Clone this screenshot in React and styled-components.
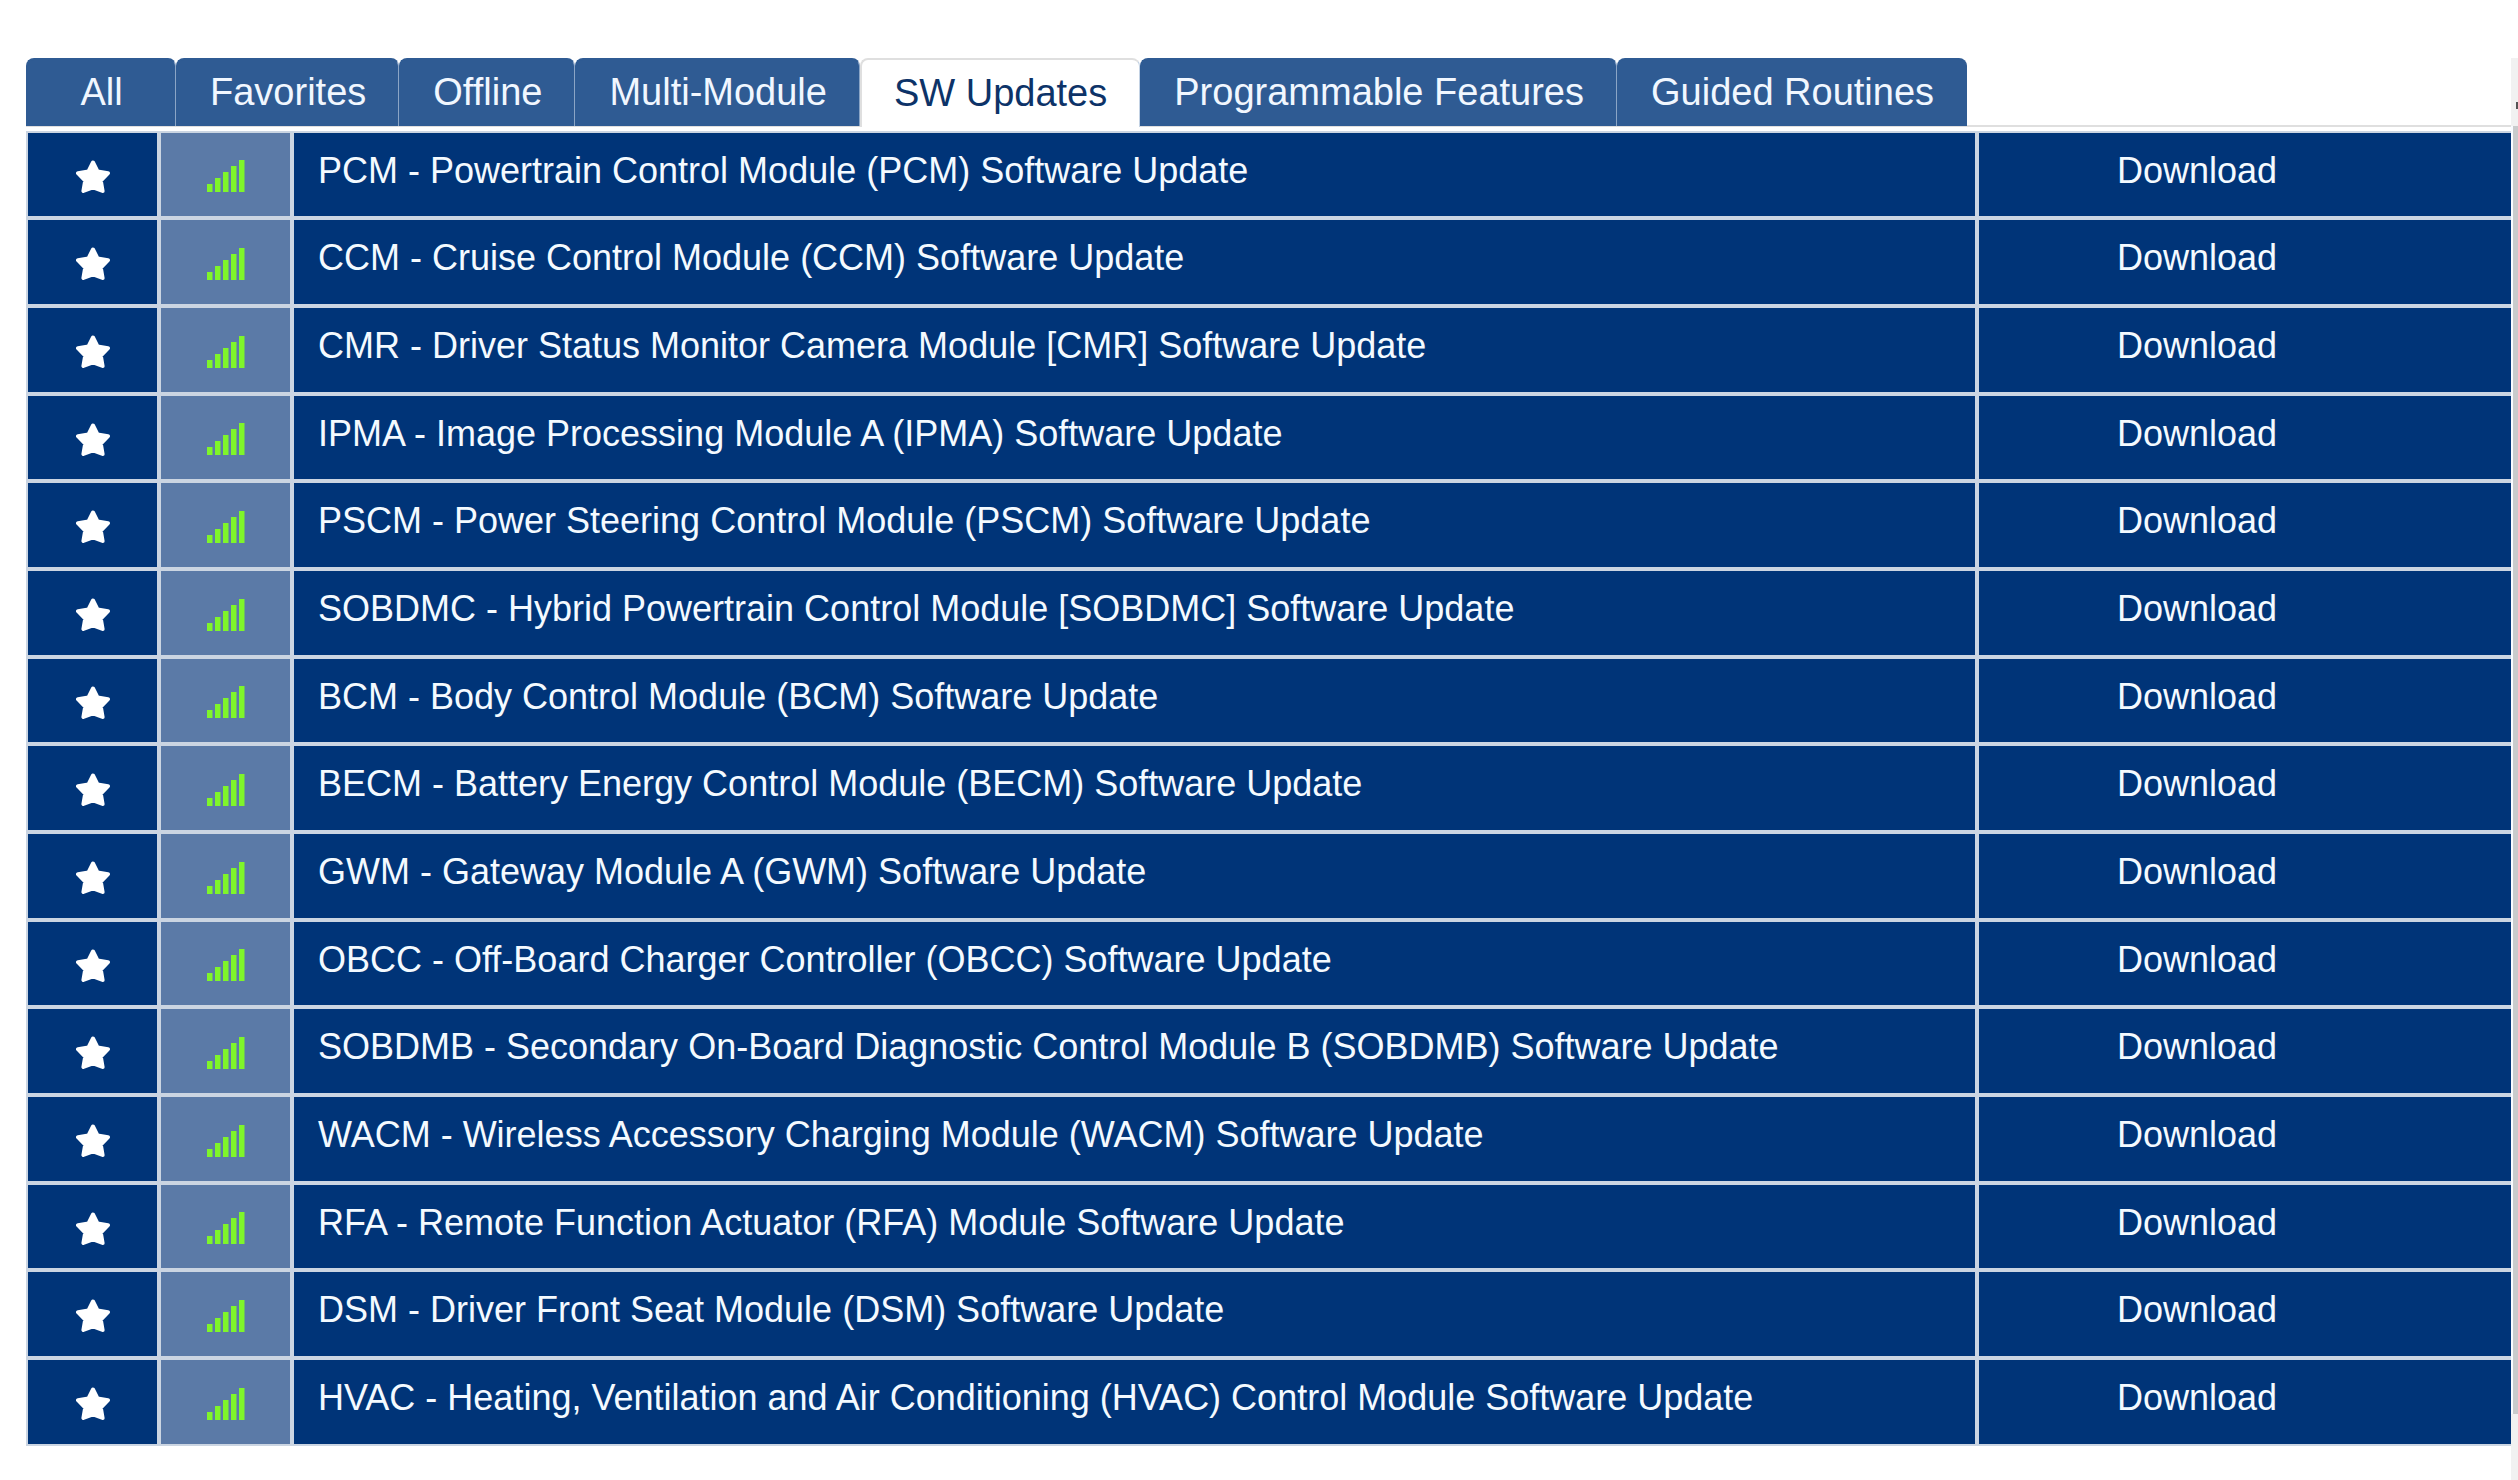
import React, { useState } from 'react';
import styled, { createGlobalStyle } from 'styled-components';

const GlobalStyle = createGlobalStyle`
  * {
    box-sizing: border-box;
  }

  body {
    margin: 0;
    background: #fff;
    font-family: Arial, "Liberation Sans", sans-serif;
  }
`;

const Page = styled.div`
  display: flex;
  padding: 58px 0 0 26px;
  min-height: 100vh;
`;

const Content = styled.main`
  flex: 1;
  min-width: 0;
`;

const TabBar = styled.div`
  display: flex;
  height: 69px;
  border-bottom: 2px solid #dfdfdf;
  margin-bottom: 4px;
`;

const Tab = styled.button`
  min-width: 150px;
  height: ${(props) => (props.$active ? '69px' : '68px')};
  padding: 0 32px 2px;
  border: 2px solid ${(props) => (props.$active ? '#dfdfdf' : '#2f5b93')};
  border-right: 1px solid ${(props) => (props.$active ? '#c3d2e4' : '#8ba5c6')};
  border-bottom: 0;
  border-radius: 8px 8px 0 0;
  background: ${(props) => (props.$active ? '#fff' : '#2f5b93')};
  color: ${(props) => (props.$active ? '#0d3368' : '#f1f7ff')};
  font-family: inherit;
  font-size: 38px;
  line-height: 42px;
  white-space: nowrap;
  cursor: pointer;

  &:last-child {
    border-right-color: #2f5b93;
  }
`;

const ModuleTable = styled.table`
  width: 100%;
  table-layout: fixed;
  border-collapse: separate;
  border-spacing: 0;
`;

const Row = styled.tr`
  height: 88px;

  &:nth-child(3n + 1) {
    height: 87px;
  }
`;

const Cell = styled.td`
  padding: 0;
  border: 2px solid #cbd5e2;
  background: #003478;
  color: #f4faff;
  font-size: 36px;
  line-height: 40px;
  vertical-align: top;

  &:last-child {
    border-right: 0;
  }
`;

const IconCell = styled(Cell)`
  padding-top: 3px;
  vertical-align: middle;
  background: ${(props) => (props.$light ? '#5b7aa7' : '#003478')};
`;

const NameCell = styled(Cell)`
  padding: 18px 24px 0;
`;

const ActionCell = styled(Cell)`
  padding: 18px 96px 0 0;
  text-align: center;
`;

const IconButton = styled.button`
  display: flex;
  margin: 0 auto;
  padding: 0;
  border: 0;
  background: none;
  color: #fff;
  cursor: pointer;
`;

const DownloadButton = styled.button`
  padding: 0;
  border: 0;
  background: none;
  color: inherit;
  font: inherit;
  cursor: pointer;
`;

const Signal = styled.svg`
  display: block;
  margin: 0 auto;
`;

const ScrollTrack = styled.div`
  width: 7px;
  background: #f1f1f1;
`;

const ArrowBox = styled.div`
  display: flex;
  justify-content: flex-end;
  align-items: center;
  height: 68px;
  padding-top: 27px;
`;

const ScrollThumb = styled.div`
  height: 1288px;
  border-left: 2px solid #f8fbff;
  background: #c9cbcc;
`;

const tabs = [
  'All',
  'Favorites',
  'Offline',
  'Multi-Module',
  'SW Updates',
  'Programmable Features',
  'Guided Routines',
];

const modules = [
  'PCM - Powertrain Control Module (PCM) Software Update',
  'CCM - Cruise Control Module (CCM) Software Update',
  'CMR - Driver Status Monitor Camera Module [CMR] Software Update',
  'IPMA - Image Processing Module A (IPMA) Software Update',
  'PSCM - Power Steering Control Module (PSCM) Software Update',
  'SOBDMC - Hybrid Powertrain Control Module [SOBDMC] Software Update',
  'BCM - Body Control Module (BCM) Software Update',
  'BECM - Battery Energy Control Module (BECM) Software Update',
  'GWM - Gateway Module A (GWM) Software Update',
  'OBCC - Off-Board Charger Controller (OBCC) Software Update',
  'SOBDMB - Secondary On-Board Diagnostic Control Module B (SOBDMB) Software Update',
  'WACM - Wireless Accessory Charging Module (WACM) Software Update',
  'RFA - Remote Function Actuator (RFA) Module Software Update',
  'DSM - Driver Front Seat Module (DSM) Software Update',
  'HVAC - Heating, Ventilation and Air Conditioning (HVAC) Control Module Software Update',
];

const StarIcon = () => (
  <svg width="34" height="33" viewBox="0 0 34 33" aria-hidden="true">
    <path
      d="M17 2.5 L21.6 11.6 L32 13.2 L24.8 20.6 L26.6 31 L17 27.4 L7.4 31 L9.2 20.6 L2 13.2 L12.4 11.6 Z"
      fill="currentColor"
      stroke="currentColor"
      strokeWidth="4"
      strokeLinejoin="round"
    />
  </svg>
);

const SignalIcon = () => (
  <Signal width="38" height="32" viewBox="0 0 38 32" aria-hidden="true">
    {[8, 14, 20, 26, 32].map((h, i) => (
      <rect key={h} x={i * 8} y={32 - h} width="5.5" height={h} fill="#7ff52a" />
    ))}
  </Signal>
);

const App = () => {
  const [active, setActive] = useState('SW Updates');

  return (
    <Page>
      <GlobalStyle />
      <Content>
        <TabBar role="tablist">
          {tabs.map((tab) => (
            <Tab
              key={tab}
              role="tab"
              aria-selected={tab === active}
              $active={tab === active}
              onClick={() => setActive(tab)}
            >
              {tab}
            </Tab>
          ))}
        </TabBar>
        <ModuleTable>
          <colgroup>
            <col width="133" />
            <col width="133" />
            <col />
            <col width="534" />
          </colgroup>
          <tbody>
            {modules.map((name) => (
              <Row key={name}>
                <IconCell>
                  <IconButton aria-label="Favorite">
                    <StarIcon />
                  </IconButton>
                </IconCell>
                <IconCell $light>
                  <SignalIcon />
                </IconCell>
                <NameCell>{name}</NameCell>
                <ActionCell>
                  <DownloadButton>Download</DownloadButton>
                </ActionCell>
              </Row>
            ))}
          </tbody>
        </ModuleTable>
      </Content>
      <ScrollTrack>
        <ArrowBox>
          <svg width="2" height="7" viewBox="0 0 2 7" aria-hidden="true">
            <rect width="2" height="7" fill="#555" />
          </svg>
        </ArrowBox>
        <ScrollThumb />
      </ScrollTrack>
    </Page>
  );
};

export default App;
